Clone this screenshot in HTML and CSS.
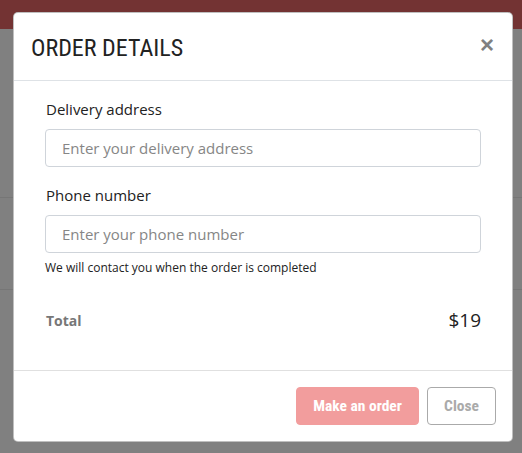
FILE: index.html
```html
<!DOCTYPE html>
<html>
<head>
<meta charset="utf-8">
<link rel="stylesheet" href="styles.css">
</head>
<body>
<div class="page">
  <div class="topbar"></div>
  <div class="section s1"></div>
  <div class="section s2"></div>
  <div class="section s3"></div>
</div>
<div class="modal">
  <div class="modal-header">
    <h2 class="modal-title">ORDER DETAILS</h2>
    <span class="close-x">&times;</span>
  </div>
  <div class="modal-body">
    <div class="field">
      <label class="label">Delivery address</label>
      <input class="input" type="text" placeholder="Enter your delivery address">
    </div>
    <div class="field">
      <label class="label">Phone number</label>
      <input class="input" type="text" placeholder="Enter your phone number">
      <div class="help">We will contact you when the order is completed</div>
    </div>
    <div class="total-row">
      <span class="total-label">Total</span>
      <span class="total-value">$19</span>
    </div>
  </div>
  <div class="modal-footer">
    <button class="btn btn-primary">Make an order</button>
    <button class="btn btn-secondary">Close</button>
  </div>
</div>
</body>
</html>
```
FILE: styles.css
```css
html, body {
  margin: 0;
  padding: 0;
}
body {
  background: #808080;
  width: 522px;
  height: 453px;
  overflow: hidden;
  font-family: "Open Sans", "Noto Sans", sans-serif;
}
.page {
  display: flex;
  flex-direction: column;
}
.topbar {
  height: 29px;
  background: #733333;
}
.section.s1 {
  height: 168px;
  border-bottom: 1px solid #767676;
}
.section.s2 {
  height: 91px;
  border-bottom: 1px solid #767676;
}
.modal {
  position: absolute;
  left: 13px;
  top: 12px;
  width: 498px;
  height: 428px;
  background: #fff;
  border: 1px solid rgba(0, 0, 0, 0.25);
  border-radius: 5px;
  display: flex;
  flex-direction: column;
}
.modal-header {
  height: 67px;
  border-bottom: 1px solid #dee2e6;
  display: flex;
  align-items: center;
  justify-content: space-between;
  padding: 0 18px 0 17px;
}
.modal-title {
  margin: 0;
  font-family: "Roboto Condensed", "Liberation Sans Narrow", "Liberation Sans", sans-serif;
  font-weight: normal;
  font-size: 24px;
  color: #222;
  padding-top: 2px;
}
.close-x {
  font-family: "Liberation Sans", sans-serif;
  font-size: 24px;
  font-weight: bold;
  color: #808080;
  line-height: 1;
  margin-top: -4px;
}
.modal-body {
  flex: 1;
  padding: 18px 31px 0 31px;
}
.field {
  display: flex;
  flex-direction: column;
  margin-bottom: 18px;
}
.label {
  font-size: 15px;
  color: #222;
  margin-bottom: 10px;
  padding-left: 1px;
  line-height: 20px;
}
.input {
  height: 38px;
  box-sizing: border-box;
  border: 1px solid #cfd4da;
  border-radius: 4px;
  padding: 0 16px;
  font-family: "Open Sans", "Noto Sans", sans-serif;
  font-size: 15px;
  color: #333;
  outline: none;
}
.input::placeholder {
  color: #868686;
}
.help {
  font-size: 12px;
  color: #222;
  margin-top: 7px;
  line-height: 16px;
}
.total-row {
  display: flex;
  justify-content: space-between;
  align-items: center;
  padding: 13px 0 0 1px;
  height: 26px;
}
.total-label {
  font-size: 14px;
  font-weight: bold;
  color: #777;
}
.total-value {
  font-size: 19px;
  color: #222;
}
.modal-footer {
  height: 70px;
  border-top: 1px solid #e0e0e0;
  display: flex;
  justify-content: flex-end;
  align-items: center;
  gap: 8px;
  padding: 0 16px;
}
.btn {
  height: 38px;
  box-sizing: border-box;
  border-radius: 4px;
  font-family: "Roboto Condensed", "Liberation Sans Narrow", "Liberation Sans", sans-serif;
  font-weight: bold;
  font-size: 15.5px;
  padding: 0;
  white-space: nowrap;
  cursor: pointer;
}
.btn-primary {
  background: #f29d9d;
  border: 1px solid #f29d9d;
  color: #fff;
  width: 123px;
}
.btn-secondary {
  background: #fff;
  border: 1px solid #aaa;
  color: #aaa;
  width: 69px;
}
```
